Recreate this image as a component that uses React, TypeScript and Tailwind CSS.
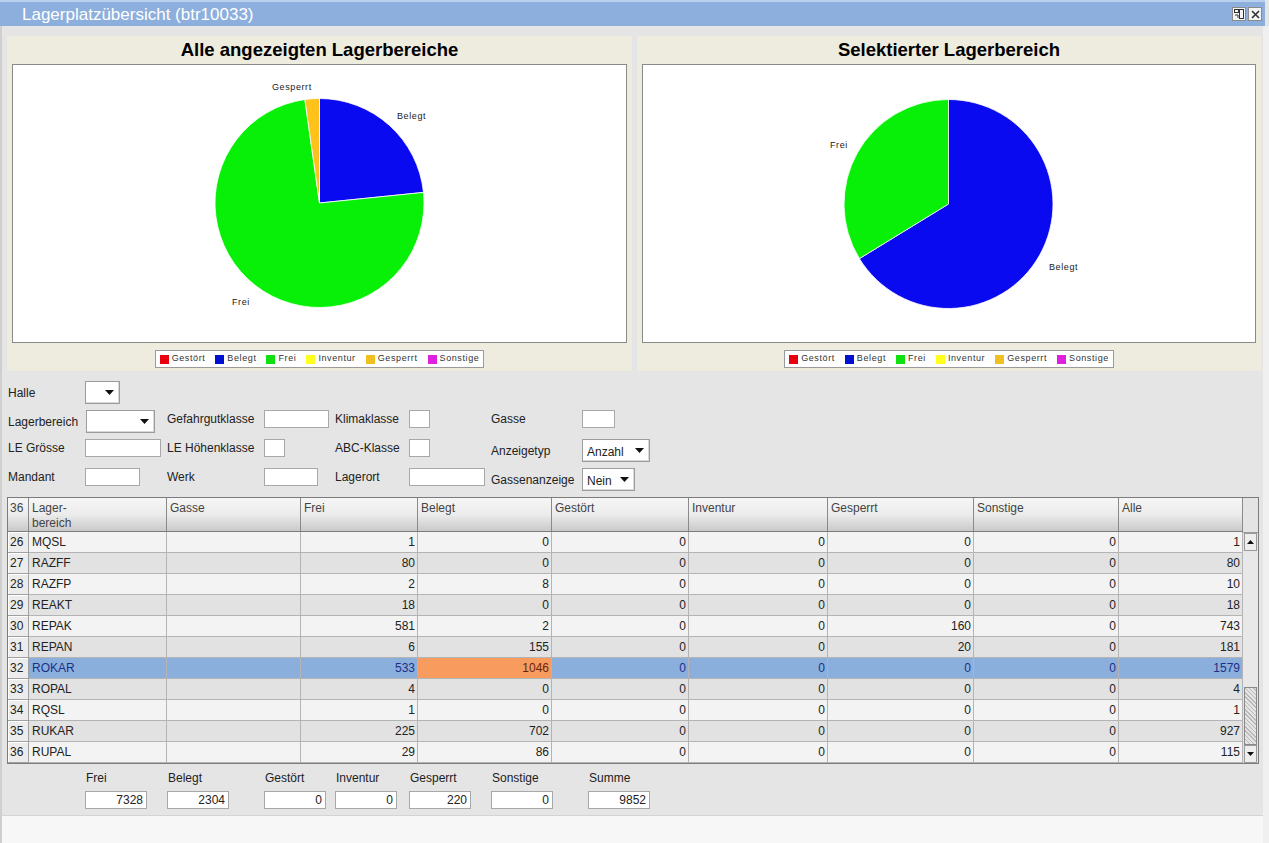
import React from "react";

type Slice = { label: string; value: number; color: string };

const rows: [number, string, number[]][] = [
  [26, "MQSL", [1, 0, 0, 0, 0, 0, 1]],
  [27, "RAZFF", [80, 0, 0, 0, 0, 0, 80]],
  [28, "RAZFP", [2, 8, 0, 0, 0, 0, 10]],
  [29, "REAKT", [18, 0, 0, 0, 0, 0, 18]],
  [30, "REPAK", [581, 2, 0, 0, 160, 0, 743]],
  [31, "REPAN", [6, 155, 0, 0, 20, 0, 181]],
  [32, "ROKAR", [533, 1046, 0, 0, 0, 0, 1579]],
  [33, "ROPAL", [4, 0, 0, 0, 0, 0, 4]],
  [34, "RQSL", [1, 0, 0, 0, 0, 0, 1]],
  [35, "RUKAR", [225, 702, 0, 0, 0, 0, 927]],
  [36, "RUPAL", [29, 86, 0, 0, 0, 0, 115]],
];

const legend = [
  { label: "Gestört", color: "#e8000c" },
  { label: "Belegt", color: "#0010d0" },
  { label: "Frei", color: "#10e010" },
  { label: "Inventur", color: "#ffff20" },
  { label: "Gesperrt", color: "#f0c020" },
  { label: "Sonstige", color: "#e020e0" },
];

function arc(cx: number, cy: number, r: number, a0: number, a1: number) {
  const p = (a: number) => {
    const rad = (a * Math.PI) / 180;
    return [cx + r * Math.sin(rad), cy - r * Math.cos(rad)];
  };
  const [x0, y0] = p(a0);
  const [x1, y1] = p(a1);
  const large = a1 - a0 > 180 ? 1 : 0;
  return `M${cx},${cy} L${x0},${y0} A${r},${r} 0 ${large} 1 ${x1},${y1} Z`;
}

function Pie({
  slices,
  cx,
  cy,
  labels,
}: {
  slices: Slice[];
  cx: number;
  cy: number;
  labels: { text: string; x: number; y: number }[];
}) {
  const total = slices.reduce((s, x) => s + x.value, 0);
  let a = 0;
  return (
    <svg width="613" height="277" className="block">
      {slices.map((s) => {
        const a0 = a;
        a += (s.value / total) * 360;
        return (
          <path
            key={s.label}
            d={arc(cx, cy, 104.5, a0, a)}
            fill={s.color}
            stroke="#ffffff"
            strokeWidth="0.8"
          />
        );
      })}
      {labels.map((l) => (
        <text
          key={l.text}
          x={l.x}
          y={l.y}
          fontSize="9"
          letterSpacing="0.6"
          fill="#222"
          fontFamily="Liberation Sans, Arial, sans-serif"
        >
          {l.text}
        </text>
      ))}
    </svg>
  );
}

function Legend() {
  return (
    <div className="flex items-center gap-[10px] h-[18px] px-[4px] bg-white border border-[#9a9a9a] text-[9px] tracking-[0.6px] text-[#333]">
      {legend.map((l) => (
        <div key={l.label} className="flex items-center gap-[3px]">
          <span className="w-[9px] h-[9px]" style={{ background: l.color }} />
          <span>{l.label}</span>
        </div>
      ))}
    </div>
  );
}

function ChartPanel({ title, width, children }: { title: string; width: string; children: React.ReactNode }) {
  return (
    <div className={`${width} h-[335px] bg-[#eeebdf] flex flex-col px-[5px]`}>
      <div className="h-[28px] flex items-center justify-center font-bold text-[18.5px] text-black">{title}</div>
      <div className="h-[279px] bg-white border border-[#8a8a8a]">{children}</div>
      <div className="flex-1 flex items-start justify-center pt-[7px]">
        <Legend />
      </div>
    </div>
  );
}

function Combo({ w, text }: { w: string; text?: string }) {
  return (
    <div className={`${w} h-[23px] bg-white border border-[#9c9c9c] flex items-center justify-between pl-[4px] pr-[5px] shadow-[inset_-1px_-1px_0_#d8d8d8]`}>
      <span className="text-[12px] text-[#222] pt-[2px]">{text}</span>
      <svg width="9" height="5" viewBox="0 0 9 5">
        <path d="M0 0 H9 L4.5 5 Z" fill="#111" />
      </svg>
    </div>
  );
}

function Field({ w, value }: { w: string; value?: string }) {
  return (
    <div className={`${w} h-[18px] bg-white border border-[#a8a8a8] text-[12px] text-[#222] text-right pr-[3px] leading-[16px]`}>
      {value}
    </div>
  );
}

function Pair({ w, label, lw, children, tall }: { w: string; label: string; lw: string; children: React.ReactNode; tall?: boolean }) {
  return (
    <div className={`${w} flex items-center self-start`}>
      <div className={`${lw} ${tall ? "h-[23px]" : "h-[18px]"} flex items-center text-[12px] text-[#222]`}>{label}</div>
      {children}
    </div>
  );
}

const colW = ["w-[21px]", "w-[138px]", "w-[134px]", "w-[117px]", "w-[134px]", "w-[137px]", "w-[139px]", "w-[146px]", "w-[145px]", "w-[124px]"];
const headers = ["36", "Lager-\nbereich", "Gasse", "Frei", "Belegt", "Gestört", "Inventur", "Gesperrt", "Sonstige", "Alle"];

function Table() {
  return (
    <div className="ml-[7px] w-[1252px] h-[267px] border-l border-t border-b border-[#7c7c7c] flex bg-[#e3e3e3]">
      <div className="flex flex-col">
        <div className="flex h-[35px] border-b border-[#7c7c7c]">
          {headers.map((h, i) => (
            <div
              key={i}
              className={`${colW[i]} h-full border-r border-[#8a8a8a] bg-gradient-to-b from-[#f6f6f6] via-[#ececec] to-[#c9c9c9] text-[12px] leading-[15px] text-[#444] ${i === 0 ? "px-[2px] pt-[3px]" : "px-[3px] pt-[3px]"} whitespace-pre`}
            >
              {h}
            </div>
          ))}
        </div>
        {rows.map(([n, name, vals], ri) => {
          const sel = n === 32;
          const bg = sel ? "bg-[#8bafdd]" : ri % 2 === 0 ? "bg-[#f3f3f3]" : "bg-[#e2e2e2]";
          const tc = sel ? "text-[#1c2f86]" : "text-[#222]";
          return (
            <div key={n} className={`flex h-[21px] ${bg} ${tc} text-[12px] leading-[21px]`}>
              <div className="w-[21px] border-r border-b border-[#a0a0a0] bg-[#ececec] text-[#222] pl-[2px] shadow-[inset_1px_1px_0_#ffffff]">{n}</div>
              <div className="w-[138px] border-r border-b border-[#b4b4b4] pl-[3px]">{name}</div>
              <div className="w-[134px] border-r border-b border-[#b4b4b4]" />
              {vals.map((v, vi) => (
                <div
                  key={vi}
                  className={`${colW[vi + 3]} border-r border-b border-[#b4b4b4] text-right pr-[2px] ${sel && vi === 1 ? "bg-[#f89b5e] text-[#6b2410]" : ""}`}
                >
                  {v}
                </div>
              ))}
            </div>
          );
        })}
      </div>
      <div className="w-[16px] flex flex-col border-r border-[#7c7c7c]">
        <div className="h-[35px] bg-[#e4e4e4] border-b border-[#9a9a9a]" />
        <div className="h-[18px] mx-[1px] bg-[#eeeeee] border border-[#9a9a9a] flex items-center justify-center">
          <svg width="7" height="4" viewBox="0 0 7 4">
            <path d="M0 4 H7 L3.5 0 Z" fill="#111" />
          </svg>
        </div>
        <div className="flex-1 bg-[#e8e8e8]" />
        <div className="h-[58px] mx-[1px] border border-[#8a8a8a] bg-[repeating-linear-gradient(45deg,#b8b8b8_0px,#b8b8b8_1px,#e4e4e4_1px,#e4e4e4_3px)]" />
        <div className="h-[18px] mx-[1px] bg-[#eeeeee] border border-[#9a9a9a] flex items-center justify-center">
          <svg width="7" height="4" viewBox="0 0 7 4">
            <path d="M0 0 H7 L3.5 4 Z" fill="#111" />
          </svg>
        </div>
      </div>
    </div>
  );
}

const sums: [string, string, string][] = [
  ["Frei", "7328", "w-[82px]"],
  ["Belegt", "2304", "w-[97px]"],
  ["Gestört", "0", "w-[71px]"],
  ["Inventur", "0", "w-[74px]"],
  ["Gesperrt", "220", "w-[82px]"],
  ["Sonstige", "0", "w-[97px]"],
  ["Summe", "9852", "w-[80px]"],
];

export default function App() {
  const all: Slice[] = [
    { label: "Belegt", value: 2304, color: "#0a0af0" },
    { label: "Frei", value: 7328, color: "#08f008" },
    { label: "Gesperrt", value: 220, color: "#ffc21a" },
  ];
  const sel: Slice[] = [
    { label: "Belegt", value: 1046, color: "#0a0af0" },
    { label: "Frei", value: 533, color: "#08f008" },
  ];
  return (
    <div className="w-[1269px] h-[843px] bg-[#e5e5e5] flex flex-col overflow-hidden font-['Liberation_Sans',Arial,sans-serif]">
      <div className="h-[26px] shrink-0 bg-[#8cafdd] border-t-2 border-[#b9cfee] mr-[4px] flex items-center justify-between pl-[22px] pr-[3px]">
        <span className="text-white text-[17px] leading-none">Lagerplatzübersicht (btr10033)</span>
        <div className="flex gap-[2px]">
          <div className="w-[14px] h-[14px] bg-[#f4f4f4] border border-[#8a8a8a] flex items-center justify-center">
            <svg width="10" height="10" viewBox="0 0 10 10">
              <rect x="0.5" y="0.5" width="4" height="3" fill="none" stroke="#333" />
              <rect x="5.5" y="0.5" width="4" height="9" fill="none" stroke="#333" />
              <path d="M1 6 H4 V9" fill="none" stroke="#333" />
            </svg>
          </div>
          <div className="w-[14px] h-[14px] bg-[#f4f4f4] border border-[#8a8a8a] flex items-center justify-center">
            <svg width="9" height="9" viewBox="0 0 9 9">
              <path d="M1 1 L8 8 M8 1 L1 8" stroke="#333" strokeWidth="1.6" />
            </svg>
          </div>
        </div>
      </div>

      <div className="flex-1 flex flex-col border-l-2 border-r-[6px] border-l-[#cfcfcf] border-r-[#f0f0f0]">
        <div className="flex gap-[5px] pt-[10px] pl-[5px]">
          <ChartPanel title="Alle angezeigten Lagerbereiche" width="w-[625px]">
            <Pie
              slices={all}
              cx={306.5}
              cy={138}
              labels={[
                { text: "Gesperrt", x: 259, y: 25 },
                { text: "Belegt", x: 384, y: 54 },
                { text: "Frei", x: 219, y: 240 },
              ]}
            />
          </ChartPanel>
          <ChartPanel title="Selektierter Lagerbereich" width="w-[624px]">
            <Pie
              slices={sel}
              cx={305.5}
              cy={139}
              labels={[
                { text: "Frei", x: 187, y: 83 },
                { text: "Belegt", x: 406, y: 205 },
              ]}
            />
          </ChartPanel>
        </div>

        <div className="flex flex-col gap-[6px] pl-[6px] pt-[10px]">
          <div className="flex">
            <Pair w="w-[159px]" lw="w-[77px]" label="Halle" tall>
              <Combo w="w-[35px]" />
            </Pair>
          </div>
          <div className="flex">
            <Pair w="w-[159px]" lw="w-[78px]" label="Lagerbereich" tall>
              <Combo w="w-[69px]" />
            </Pair>
            <Pair w="w-[168px]" lw="w-[97px]" label="Gefahrgutklasse">
              <Field w="w-[65px]" />
            </Pair>
            <Pair w="w-[156px]" lw="w-[74px]" label="Klimaklasse">
              <Field w="w-[21px]" />
            </Pair>
            <Pair w="w-[200px]" lw="w-[91px]" label="Gasse">
              <Field w="w-[33px]" />
            </Pair>
          </div>
          <div className="flex">
            <Pair w="w-[159px]" lw="w-[77px]" label="LE Grösse">
              <Field w="w-[76px]" />
            </Pair>
            <Pair w="w-[168px]" lw="w-[97px]" label="LE Höhenklasse">
              <Field w="w-[21px]" />
            </Pair>
            <Pair w="w-[156px]" lw="w-[74px]" label="ABC-Klasse">
              <Field w="w-[21px]" />
            </Pair>
            <Pair w="w-[200px]" lw="w-[91px]" label="Anzeigetyp" tall>
              <Combo w="w-[68px]" text="Anzahl" />
            </Pair>
          </div>
          <div className="flex">
            <Pair w="w-[159px]" lw="w-[77px]" label="Mandant">
              <Field w="w-[55px]" />
            </Pair>
            <Pair w="w-[168px]" lw="w-[97px]" label="Werk">
              <Field w="w-[54px]" />
            </Pair>
            <Pair w="w-[156px]" lw="w-[74px]" label="Lagerort">
              <Field w="w-[76px]" />
            </Pair>
            <Pair w="w-[200px]" lw="w-[91px]" label="Gassenanzeige" tall>
              <Combo w="w-[53px]" text="Nein" />
            </Pair>
          </div>
        </div>

        <div className="mt-[6px] -ml-[2px]">
          <Table />
        </div>

        <div className="flex pl-[83px] pt-[7px]">
          {sums.map(([l, v, w]) => (
            <div key={l} className={`${w} flex flex-col gap-[5px]`}>
              <span className="text-[12px] text-[#222] h-[15px] leading-[15px] pl-[1px]">{l}</span>
              <Field w="w-[62px]" value={v} />
            </div>
          ))}
        </div>

        <div className="mt-auto h-[28px] bg-[#f7f7f7] border-t border-[#d4d4d4]" />
      </div>
    </div>
  );
}
